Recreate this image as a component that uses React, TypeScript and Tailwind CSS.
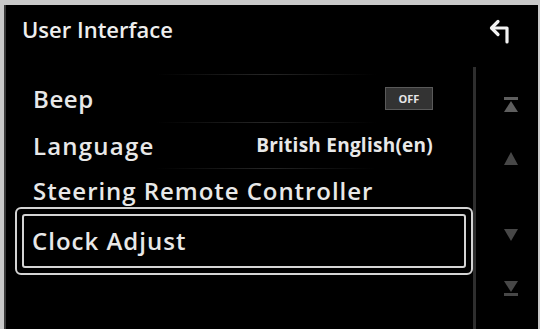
import React from "react";

const font = { fontFamily: '"Open Sans", "Noto Sans", sans-serif' };

function BackIcon() {
  return (
    <svg width="24" height="26" viewBox="0 0 24 26" fill="none">
      <path d="M19 24 V10 H4" stroke="#f2f2f2" strokeWidth="3.2" strokeLinecap="round" strokeLinejoin="round" />
      <path d="M10 3.5 L3.5 10 L10 16.5" stroke="#f2f2f2" strokeWidth="3.2" strokeLinecap="round" strokeLinejoin="round" />
    </svg>
  );
}

function TopIcon({ color }: { color: string }) {
  return (
    <svg width="16" height="16" viewBox="0 0 16 16">
      <rect x="1" y="0" width="14" height="3" fill={color} />
      <path d="M8 4 L15 15 H1 Z" fill={color} />
    </svg>
  );
}
function BottomIcon({ color }: { color: string }) {
  return (
    <svg width="16" height="16" viewBox="0 0 16 16">
      <path d="M1 1 H15 L8 12 Z" fill={color} />
      <rect x="1" y="13" width="14" height="3" fill={color} />
    </svg>
  );
}
function UpIcon({ color }: { color: string }) {
  return (
    <svg width="16" height="16" viewBox="0 0 16 16">
      <path d="M8 2 L15 15 H1 Z" fill={color} />
    </svg>
  );
}
function DownIcon({ color }: { color: string }) {
  return (
    <svg width="16" height="14" viewBox="0 0 16 14">
      <path d="M1 1 H15 L8 13 Z" fill={color} />
    </svg>
  );
}

function Sep() {
  return <div className="h-px ml-[150px] w-[220px] bg-gradient-to-r from-transparent via-[#262626] to-transparent" />;
}

export default function App() {
  return (
    <div className="w-[540px] h-[329px] bg-[#c9c9c9] pt-[5px] pl-[4px] pr-[2px] overflow-hidden" style={font}>
      <div className="w-full h-full bg-black border-l-2 border-[#3a3a3a] flex flex-col">
        <div className="h-[57px] flex items-center justify-between pl-[16px] pr-[26px] shrink-0">
          <span className="text-[22px] font-semibold text-[#eeeeee] tracking-[0px] leading-none mt-[-10px]">User Interface</span>
          <div className="mt-[-6px]">
            <BackIcon />
          </div>
        </div>
        <div className="flex flex-1">
          <div className="w-[467px] flex flex-col pt-[12px]">
            <Sep />
            <div className="h-[47px] flex items-center justify-between pl-[27px] pr-[40px]">
              <span className="text-[24px] font-semibold text-[#e8e8e8] leading-none tracking-[0.6px]">Beep</span>
              <div className="w-[48px] h-[23px] bg-[#333] border border-[#5a5a5a] flex items-center justify-center">
                <span className="text-[11px] font-bold text-[#e6e6e6] leading-none">OFF</span>
              </div>
            </div>
            <Sep />
            <div className="h-[45px] flex items-center justify-between pl-[27px] pr-[40px]">
              <span className="text-[24px] font-semibold text-[#e8e8e8] leading-none tracking-[1.2px]">Language</span>
              <span className="text-[19px] font-bold text-[#e8e8e8] leading-none tracking-[0.25px]">British English(en)</span>
            </div>
            <Sep />
            <div className="h-[40px] flex items-center pl-[27px] pt-[4px]">
              <span className="text-[24px] font-semibold text-[#e8e8e8] leading-none tracking-[0.95px]">Steering Remote Controller</span>
            </div>
            <div className="ml-[9px] h-[68px] border-2 border-[#d4d4d4] rounded-[6px] p-[5px] mt-[-2px]">
              <div className="w-full h-full border-2 border-[#d4d4d4] rounded-[3px] flex items-center pl-[8px]">
                <span className="text-[24px] font-semibold text-[#e8e8e8] leading-none tracking-[1px]">Clock Adjust</span>
              </div>
            </div>
          </div>
          <div className="flex-1 mt-[5px] border-l-[3px] border-[#2e2e2e] flex flex-col items-center pl-[8px]">
            <div className="mt-[30px]"><TopIcon color="#5e5e5e" /></div>
            <div className="mt-[37px]"><UpIcon color="#474747" /></div>
            <div className="mt-[62px]"><DownIcon color="#474747" /></div>
            <div className="mt-[38px]"><BottomIcon color="#474747" /></div>
          </div>
        </div>
      </div>
    </div>
  );
}
